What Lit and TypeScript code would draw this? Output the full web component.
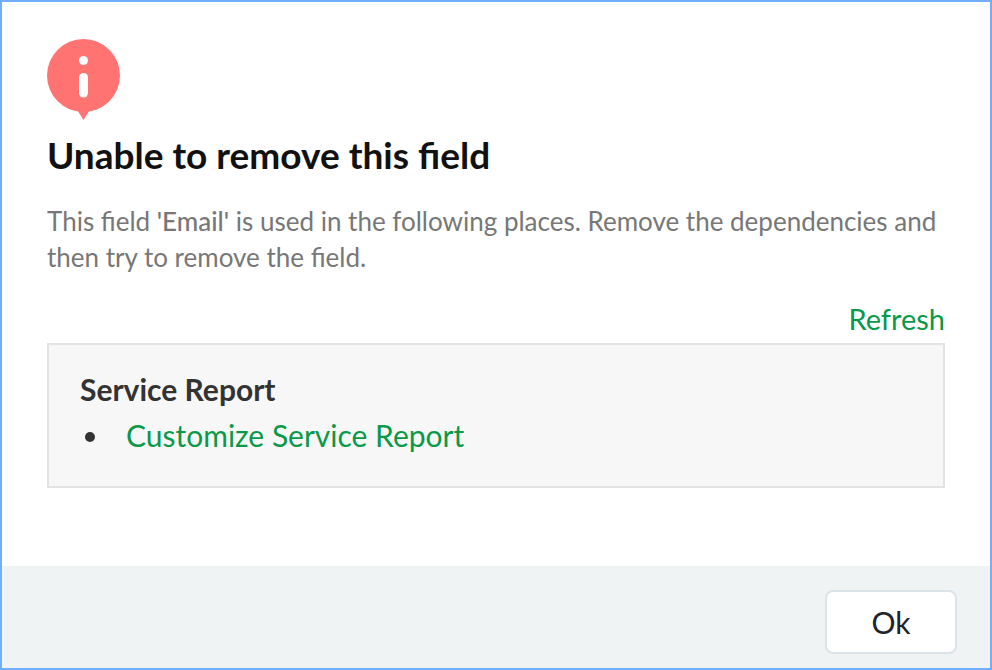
import { LitElement, html, css } from "lit";
import { customElement } from "lit/decorators.js";

@customElement("app-root")
export class AppRoot extends LitElement {
  static styles = css`
    :host {
      display: block;
      font-family: Lato, sans-serif;
      color: #333;
    }
    * { box-sizing: border-box; }
    .dialog {
      display: flex;
      flex-direction: column;
      min-height: 100vh;
      border: 2px solid #71aeff;
      background: #fff;
    }
    .body { flex: 1; padding: 37px 45px 76px; }
    .icon { display: block; width: 73px; height: 82px; }
    h1 { margin: 12px 0 0; font-size: 37px; line-height: 44px; font-weight: 700; color: #111; }
    .message { margin: 26px 0 0; font-size: 26px; line-height: 36px; color: #777; }
    .field { font-weight: 500; }
    .tools { display: flex; justify-content: flex-end; margin-top: 26px; font-size: 29px; line-height: 36px; }
    a { color: #089949; text-decoration: none; }
    .places { margin-top: 6px; padding: 26px 31px 33px; border: 2px solid #e3e3e3; background: #f7f7f7; font-size: 30px; line-height: 36px; }
    h2 { margin: 0; font-size: 30px; line-height: 36px; font-weight: 700; }
    ul { margin: 10px 0 0; padding: 0 0 0 32px; list-style: disc; }
    li { padding-left: 14px; }
    .footer { display: flex; justify-content: flex-end; padding: 24px 33px 14px; background: #eff3f4; }
    button { width: 132px; height: 64px; border: 2px solid #dae3e7; border-radius: 8px; background: #fff; font: 400 30px/36px Lato, sans-serif; color: #22222a; }
  `;

  render() {
    return html`
      <main class="dialog" role="alertdialog" aria-labelledby="title" aria-describedby="message">
        <div class="body">
          <svg class="icon" viewBox="0 0 73 82" aria-hidden="true">
            <circle cx="36.5" cy="36.5" r="36.5" fill="#ff7472" />
            <path fill="#ff7472" d="M30 71h13l-1.500 2-5 8-5-8z" />
            <circle cx="36.5" cy="21.500" r="4.500" fill="#fff" />
            <rect x="32" y="34" width="9" height="24.500" rx="4.500" fill="#fff" />
          </svg>
          <h1 id="title">Unable to remove this field</h1>
          <p class="message" id="message">
            This field <span class="field">'Email'</span> is used in the following places. Remove the dependencies and then try to remove the field.
          </p>
          <div class="tools"><a href="#refresh">Refresh</a></div>
          <section class="places">
            <h2>Service Report</h2>
            <ul><li><a href="#customize">Customize Service Report</a></li></ul>
          </section>
        </div>
        <footer class="footer"><button type="button">Ok</button></footer>
      </main>
    `;
  }
}
